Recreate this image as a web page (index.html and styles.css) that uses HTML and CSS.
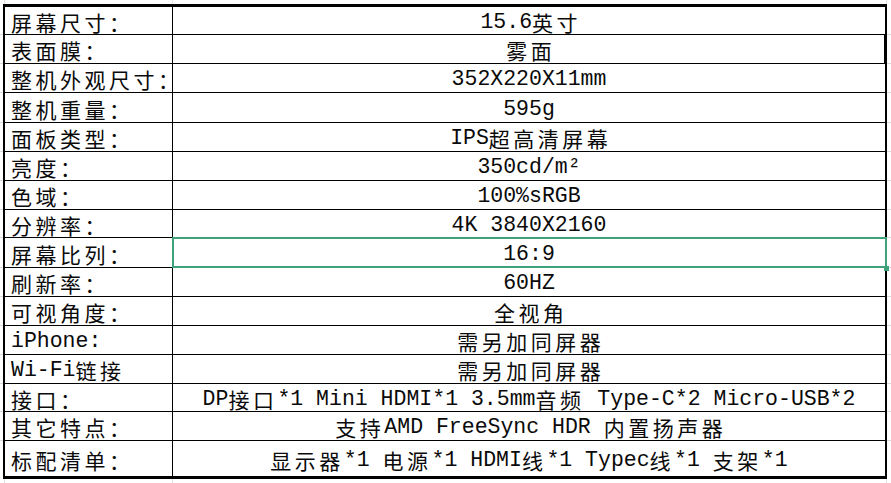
FILE: index.html
```html
<!DOCTYPE html>
<html lang="zh-CN">
<head>
<meta charset="utf-8">
<title>规格参数</title>
<link rel="stylesheet" href="styles.css">
</head>
<body>
<div class="sheet">
  <div class="strip"><div class="gl"></div><div class="k"></div><div class="v"></div><div class="gr"></div></div>
  <div class="rule"></div>
  <div class="row h28"><div class="gl"></div><div class="k"><span class="c">屏幕尺寸：</span></div><div class="v">15.6<span class="c e">英寸</span></div><div class="gr"></div></div>
  <div class="row"><div class="gl"></div><div class="k"><span class="c">表面膜：</span></div><div class="v thick"><span class="c e">雾面</span></div><div class="gr"></div></div>
  <div class="row"><div class="gl"></div><div class="k"><span class="c">整机外观尺寸：</span></div><div class="v">352X220X11mm</div><div class="gr"></div></div>
  <div class="row h30"><div class="gl"></div><div class="k"><span class="c">整机重量：</span></div><div class="v">595g</div><div class="gr"></div></div>
  <div class="row"><div class="gl"></div><div class="k"><span class="c">面板类型：</span></div><div class="v">IPS<span class="c e">超高清屏幕</span></div><div class="gr"></div></div>
  <div class="row"><div class="gl"></div><div class="k"><span class="c">亮度：</span></div><div class="v">350cd/m²</div><div class="gr"></div></div>
  <div class="row"><div class="gl"></div><div class="k"><span class="c">色域：</span></div><div class="v">100%sRGB</div><div class="gr"></div></div>
  <div class="row h28"><div class="gl"></div><div class="k"><span class="c">分辨率：</span></div><div class="v">4K 3840X2160</div><div class="gr"></div></div>
  <div class="row h30"><div class="gl"></div><div class="k"><span class="c">屏幕比列：</span></div><div class="v sel">16:9<span class="handle"></span></div><div class="gr"></div></div>
  <div class="row"><div class="gl"></div><div class="k"><span class="c">刷新率：</span></div><div class="v">60HZ</div><div class="gr"></div></div>
  <div class="row"><div class="gl"></div><div class="k"><span class="c">可视角度：</span></div><div class="v"><span class="c e">全视角</span></div><div class="gr"></div></div>
  <div class="row"><div class="gl"></div><div class="k">iPhone:</div><div class="v"><span class="c e">需另加同屏器</span></div><div class="gr"></div></div>
  <div class="row"><div class="gl"></div><div class="k">Wi-Fi<span class="c">链接</span></div><div class="v"><span class="c e">需另加同屏器</span></div><div class="gr"></div></div>
  <div class="row h28"><div class="gl"></div><div class="k"><span class="c">接口：</span></div><div class="v">DP<span class="c">接口</span>*1 Mini HDMI*1 3.5mm<span class="c">音频</span> Type-C*2 Micro-USB*2</div><div class="gr"></div></div>
  <div class="row"><div class="gl"></div><div class="k"><span class="c">其它特点：</span></div><div class="v"><span class="c">支持</span>AMD FreeSync HDR <span class="c e">内置扬声器</span></div><div class="gr"></div></div>
  <div class="row h35 last"><div class="gl"></div><div class="k"><span class="c">标配清单：</span></div><div class="v"><span class="c">显示器</span>*1 <span class="c">电源</span>*1 HDMI<span class="c">线</span>*1 Typec<span class="c">线</span>*1 <span class="c">支架</span>*1</div><div class="gr"></div></div>
  <div class="rule"></div>
  <div class="strip"><div class="gl"></div><div class="k"></div><div class="v"></div><div class="gr"></div></div>
</div>
</body>
</html>
```
FILE: styles.css
```css
* { box-sizing: border-box; }
html, body { margin: 0; padding: 0; background: #fff; }
body {
  font-family: "Liberation Mono", "Noto Sans CJK SC", monospace;
  font-size: 21.5px;
  color: #0a0a0a;
}
.sheet { width: 891px; height: 483px; overflow: hidden; }

.row, .strip { display: flex; height: 29px; }
.row.h28 { height: 28px; }
.row.h30 { height: 30px; }
.row.h35 { height: 35px; }
.strip { height: 4px; }

.gl { width: 3px; flex: none; border-bottom: 1px solid #dcdcdc; }
.gr { flex: 1; border-bottom: 1px solid #dcdcdc; }

.k {
  width: 170px;
  flex: none;
  border-left: 2px solid #000;
  border-right: 1px solid #000;
  border-bottom: 1px solid #000;
  display: flex;
  align-items: center;
  padding: 2px 0 0 6px;
  line-height: 22px;
  white-space: nowrap;
}
.v {
  width: 714px;
  flex: none;
  border-right: 2px solid #000;
  border-bottom: 1px solid #000;
  display: flex;
  align-items: center;
  justify-content: center;
  padding-top: 2px;
  line-height: 22px;
  white-space: pre;
}
.row.last .k, .row.last .v, .row.last .gl, .row.last .gr { border-bottom: none; }

.strip .gl, .strip .gr { border-bottom: none; }
.strip .k { border-left: 1px solid #e2e2e2; border-right: 1px solid #e2e2e2; border-bottom: none; margin-left: 1px; width: 169px; }
.strip .v { border-right: 1px solid #e2e2e2; border-bottom: none; width: 714px; }

.rule { margin-left: 3px; width: 884px; height: 3px; background: #000; }

.c {
  font-family: "Noto Sans CJK SC", sans-serif;
  font-size: 21px;
  letter-spacing: 3.5px;
}
.c.e { margin-right: -3.5px; }

.v.thick { box-shadow: inset -1px 0 0 #000; }

.v.sel { position: relative; }
.v.sel::after {
  content: "";
  position: absolute;
  left: -1px;
  top: -1px;
  right: -2px;
  bottom: -1px;
  border: 2px solid #3fa27a;
}
.handle {
  position: absolute;
  right: -4px;
  bottom: -4px;
  width: 5px;
  height: 5px;
  background: #3fa27a;
  z-index: 1;
}
```
